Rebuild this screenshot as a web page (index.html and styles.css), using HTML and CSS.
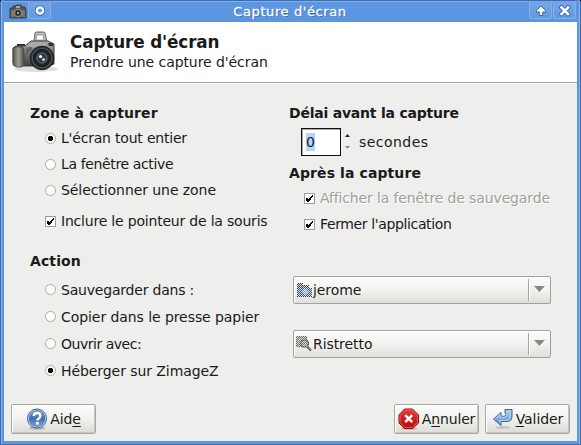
FILE: index.html
```html
<!DOCTYPE html>
<html lang="fr">
<head>
<meta charset="utf-8">
<title>Capture d'écran</title>
<link rel="stylesheet" href="styles.css">
</head>
<body>
<svg width="0" height="0" class="defs">
  <defs>
    <linearGradient id="body" x1="0" y1="0" x2="0" y2="1"><stop offset="0" stop-color="#aaa9a2"/><stop offset=".5" stop-color="#74736d"/><stop offset="1" stop-color="#3d3d3a"/></linearGradient>
    <linearGradient id="grip" x1="0" y1="0" x2="1" y2="0"><stop offset="0" stop-color="#55544d"/><stop offset=".5" stop-color="#a09f94"/><stop offset="1" stop-color="#4b4a45"/></linearGradient>
    <radialGradient id="lens"><stop offset="0" stop-color="#8a9095"/><stop offset=".45" stop-color="#333b42"/><stop offset="1" stop-color="#14191d"/></radialGradient>
    <linearGradient id="blue" x1="0" y1="0" x2="0" y2="1"><stop offset="0" stop-color="#7fa3d1"/><stop offset=".5" stop-color="#3f6dad"/><stop offset="1" stop-color="#7da7da"/></linearGradient>
    <linearGradient id="red" x1="0" y1="0" x2="0" y2="1"><stop offset="0" stop-color="#e33b3b"/><stop offset="1" stop-color="#b80808"/></linearGradient>
    <linearGradient id="arrow" x1="0" y1="0" x2="0" y2="1"><stop offset="0" stop-color="#a9c8eb"/><stop offset="1" stop-color="#6492c9"/></linearGradient>
    <pattern id="dots" width="2" height="2" patternUnits="userSpaceOnUse"><path d="M0 0h1v1H0zM1 1h1v1H1z" fill="#dcdedf"/></pattern>
    <symbol id="tick" viewBox="0 0 11 11"><path d="M2 5h2v1h1V5h1V4h1V3h1V2h1v2H8v1H7v2H6v1H5v1H3V8H2z" fill="#000"/></symbol>
    <symbol id="drop" viewBox="0 0 12 7"><path d="M2 1h10L7 7z" fill="#fff"/><path d="M0 0h11L5.5 6z" fill="#888883"/></symbol>
  </defs>
</svg>
<div class="window">
  <header class="titlebar">
    <svg class="mini-camera" width="18" height="16" viewBox="0 0 18 16"><path d="M1 4h3V2h2v1l1-2h5l1 2h3v2h1v9H1z" fill="#555650" stroke="#3c403f"/><path d="M2 6h3v7H2zm11 0h3v7h-3z" fill="#77776f"/><path d="M7 2h4v2H7z" fill="#a6a69f"/><circle cx="9" cy="9" r="4" fill="#55564f" stroke="#a09f94" stroke-width=".8"/><circle cx="9" cy="9" r="2.4" fill="#24282b"/><path d="M8 8h2v2H8z" fill="#a3a7a8"/></svg>
    <span class="tool menu"><svg width="14" height="14" viewBox="0 0 14 14"><circle cx="7" cy="6.500" r="3.2" fill="#5c93dc" stroke="#3a68a8" stroke-width="4"/><circle cx="7" cy="6.500" r="3.2" fill="#5c93dc" stroke="#fff" stroke-width="2.3"/></svg></span>
    <h1 class="caption">Capture d'écran</h1>
    <span class="tool"><svg width="14" height="14" viewBox="0 0 14 14"><path d="M7 2L11.5 6.6V8H8.7v3.5H5.3V8H2.5V6.6z" fill="#fff" stroke="#3b69a9" stroke-width="1"/></svg></span>
    <span class="tool close"><svg width="14" height="14" viewBox="0 0 14 14"><path d="M3.500 3.500l6.500 6.500m0-6.500L3.500 10" stroke="#3b69a9" stroke-width="4.400" stroke-linecap="square"/><path d="M3.500 3.500l6.500 6.500m0-6.500L3.500 10" stroke="#fff" stroke-width="2.500" stroke-linecap="square"/></svg></span>
  </header>
  <div class="client">
    <section class="banner">
      <svg class="camera" width="48" height="46" viewBox="0 0 48 46">
        <ellipse cx="24" cy="39" rx="22" ry="3" fill="#dededc"/>
        <path d="M22 11l1-8q0-1 2-1h6q2 0 2 1l2 9" fill="#bbb" stroke="#666"/><path d="M25 5h6l1 5h-8z" fill="#fff" stroke="#888" stroke-width=".7"/>
        <path d="M1 18l3-2h9l6-5h17l6 3v20l-5 2H4l-3-3z" fill="url(#body)" stroke="#3d3c38"/>
        <path d="M1 19q0-2 3-2h5q3 0 3 3v15l-2 2H4l-3-2z" fill="url(#grip)" stroke="#45443e" stroke-width=".7"/>
        <path d="M14 16l6-4h13l2 4-10 2z" fill="#aaa9a5"/><path d="M5 14h8v2H5zM36 13h5v3h-4z" fill="#34342f"/>
        <path d="M15 18v6m2-7v5m2-5v4" stroke="#4a4946"/>
        <circle cx="30" cy="28" r="11.800" fill="#30383c" stroke="#171b1d"/><circle cx="30" cy="28" r="10" fill="#59636a"/><circle cx="30" cy="28" r="8.700" fill="url(#lens)" stroke="#14191b"/><circle cx="30" cy="28" r="5" fill="#303940" stroke="#7f878b" stroke-width=".7"/><circle cx="28.500" cy="26.500" r="1.600" fill="#fff"/><circle cx="31.500" cy="29.500" r="1.600" fill="#c2ccd1"/>
      </svg>
      <div><h2 class="title">Capture d'écran</h2><p class="subtitle">Prendre une capture d'écran</p></div>
    </section>
    <main class="options">
      <section class="zone">
        <h3 class="heading">Zone à capturer</h3>
        <label class="choice snug"><i class="radio on"></i><span>L'écran tout entier</span></label>
        <label class="choice tight"><i class="radio"></i><span>La fenêtre active</span></label>
        <label class="choice"><i class="radio"></i><span>Sélectionner une zone</span></label>
        <label class="choice pointer snug"><i class="check"><svg width="11" height="11"><use href="#tick"/></svg></i><span>Inclure le pointeur de la souris</span></label>
      </section>
      <section class="timing">
        <h3 class="heading narrow">Délai avant la capture</h3>
        <div class="delay"><span class="entry"><span class="selected">0</span></span><svg class="spin" width="6" height="16" viewBox="0 0 6 16"><path d="M0 3h5L2.5 0z" fill="#222"/><path d="M1 14h5l-2.500 3z" fill="#fff"/><path d="M0 12h5l-2.500 3z" fill="#888"/></svg><span class="unit">secondes</span></div>
        <h3 class="heading after">Après la capture</h3>
        <label class="choice disabled"><i class="check"><svg width="11" height="11"><use href="#tick"/></svg></i><span>Afficher la fenêtre de sauvegarde</span></label>
        <label class="choice tight"><i class="check"><svg width="11" height="11"><use href="#tick"/></svg></i><span>Fermer l'application</span></label>
      </section>
    </main>
    <section class="action">
      <h3 class="heading">Action</h3>
      <div class="line"><label class="choice snug"><i class="radio"></i><span>Sauvegarder dans :</span></label>
        <div class="combo"><svg width="17" height="16" viewBox="0 0 17 16"><path d="M1 1h6v2h6v3h3v9H1z" fill="#3b4045"/><path d="M2 6h14v8H1z" fill="#2f5080"/><path d="M6 10l3-4 4 4-4 3z" fill="#91abc9"/><path d="M1 1h6v2h6v3h3v9H1z" fill="url(#dots)"/></svg><span>jerome</span><b class="divider"></b><svg class="drop" width="12" height="7"><use href="#drop"/></svg></div></div>
      <div class="line"><label class="choice"><i class="radio"></i><span>Copier dans le presse papier</span></label></div>
      <div class="line"><label class="choice tighter"><i class="radio"></i><span>Ouvrir avec:</span></label>
        <div class="combo"><svg width="17" height="16" viewBox="0 0 17 16"><path d="M0 0h11v11H0z" fill="#62664f"/><path d="M2 2h7v6H2z" fill="#7e8355"/><circle cx="8.500" cy="7.500" r="4" fill="#70777b" stroke="#393c3d"/><path d="M0 0h12v12H0z" fill="url(#dots)"/><circle cx="8.500" cy="7.500" r="3.800" fill="none" stroke="#666b6d" stroke-width=".7"/><path d="M11.500 11l3.500 3.500" stroke="#594933" stroke-width="2.200"/><path d="M12 11.500l2.500 2.500" stroke="#c69a55"/></svg><span class="app">Ristretto</span><b class="divider"></b><svg class="drop" width="12" height="7"><use href="#drop"/></svg></div></div>
      <div class="line"><label class="choice"><i class="radio on"></i><span>Héberger sur ZimageZ</span></label></div>
    </section>
    <footer class="buttons">
      <button class="help"><svg width="22" height="22" viewBox="0 0 22 22"><ellipse cx="11" cy="20" rx="8" ry="1.700" fill="#b5b5b2"/><circle cx="11" cy="10.500" r="9.500" fill="#dce8f5" stroke="#2f599a"/><circle cx="11" cy="10.500" r="8" fill="url(#blue)" stroke="#3969a8" stroke-width=".6"/><path d="M7.800 8q0-3 3.300-3t3.300 2.800q0 1.700-1.700 2.700-1.400.8-1.400 2" fill="none" stroke="#fff" stroke-width="2.400"/><path d="M10 14h2.700v2.500H10z" fill="#fff"/></svg><span>Aid<u>e</u></span></button>
      <button class="cancel"><svg width="22" height="22" viewBox="0 0 22 22"><ellipse cx="11" cy="20.500" rx="8" ry="1.300" fill="#b5b5b2"/><path d="M6.500 1h8L20.500 7v8l-6 5.500h-8L1 15V7z" fill="url(#red)" stroke="#a40000"/><path d="M7 2h7.200l5.300 5.300v7.200l-5.300 5H7l-5-5V7.300z" fill="none" stroke="#f08080" stroke-width=".7"/><path d="M7.200 7.200l7 7m0-7l-7 7" stroke="#fff" stroke-width="2.400"/></svg><span>A<u>n</u>nuler</span></button>
      <button class="ok"><svg width="22" height="22" viewBox="0 0 22 22"><ellipse cx="11" cy="19.500" rx="8" ry="1.500" fill="#c5c5c2"/><path d="M1.500 11L9 4.500v3.800h3q2 0 2-2V5h-1V1.500h7V8q0 5.500-5 5.500H9v4z" fill="url(#arrow)" stroke="#3566a5" stroke-linejoin="round"/><path d="M3 11l5-4.200v2.500h4.500Q15 9 15 6V3M16.500 3h1.800v5q0 4.500-4 4.500H8v2.700" fill="none" stroke="#d3e3f6" stroke-width=".8"/></svg><span><u>V</u>alider</span></button>
    </footer>
  </div>
</div>
</body>
</html>
```
FILE: styles.css
```css
* { box-sizing: border-box; }
body { margin: 0; width: 581px; height: 445px; overflow: hidden; background: #111; font: 14px/18px "DejaVu Sans", sans-serif; color: #1a1a1a; letter-spacing: -.07px; }
h1, h2, h3, p { margin: 0; }
svg { display: block; flex: none; }
.defs { position: absolute; }
.window { width: 581px; height: 445px; padding: 0 3px 3px; border: 1px solid #3d6cb1; border-top: 0; border-radius: 3px 3px 0 0; background: #5c96e1; box-shadow: inset 1px 0 #88b4ef, inset -1px 0 #88b4ef; }
.titlebar { height: 22px; display: flex; align-items: flex-start; border-top: 1px solid #3d6cb1; box-shadow: inset 0 1px #83b0ed; padding: 0 1px 0 5px; }
.mini-camera { margin: 3px 1px 0 0; }
.tool { width: 23px; height: 18px; display: flex; justify-content: center; padding-top: 2px; border: 1px solid #85afe9; border-top-color: #76a5e7; border-radius: 0 0 3px 3px; background: linear-gradient(#76a5e6, #629ae2); }
.close { margin-left: 1px; }
.caption { flex: 1; text-align: center; font-size: 13px; line-height: 22px; color: #fff; font-weight: 400; letter-spacing: .6px; text-shadow: 1px 1px #3b69aa; -webkit-text-stroke: .3px #fff; }
.client { height: 419px; background: #eeeeec; display: flex; flex-direction: column; }
.banner { height: 61px; background: #fff; border-bottom: 1px solid #a3a39b; padding: 8px 0 0 8px; display: flex; gap: 10px; flex: none; box-shadow: 0 1px #fff; }
.title { font-size: 16.8px; line-height: 22px; letter-spacing: -.12px; margin-top: 1px; }
.subtitle { line-height: 18px; }
.options { display: grid; grid-template-columns: 259px 1fr; padding: 21px 0 0 26px; height: 167px; }
.heading { font-size: 14px; line-height: 18px; letter-spacing: .1px; }
.narrow { letter-spacing: -.22px; }
.choice { display: flex; align-items: center; gap: 5px; height: 26px; padding-left: 15px; white-space: nowrap; }
.snug { letter-spacing: -.2px; }
.tight { letter-spacing: -.37px; }
.tighter { letter-spacing: -.48px; }
.zone .heading { margin-bottom: 3px; }
.pointer { margin-top: 5px; }
.radio { width: 11px; height: 11px; border: 1px solid #aaa9a1; border-radius: 50%; background: #fff; flex: none; }
.radio.on { background: radial-gradient(circle, #000 0 2.300px, #fff 3px); }
.check { width: 11px; height: 11px; border: 1px solid #9e9e96; background: #fff; flex: none; }
.check svg { margin: -1px; }
.delay { display: flex; align-items: center; height: 28px; margin: 6px 0 8px 12px; }
.entry { width: 40px; height: 28px; border: 1px solid #111; padding: 4px; background: #fff; box-shadow: inset 1px 1px #aaa9a1; }
.selected { display: block; width: 9px; height: 18px; line-height: 19px; background: #b3d5ff; }
.spin { margin: 0 8px 0 4px; }
.unit { letter-spacing: .45px; }
.after { margin-bottom: 3px; }
.disabled { color: #a0a09a; letter-spacing: -.13px; text-shadow: 1px 1px #fff; }
.action { padding: 2px 26px 0; height: 136px; }
.action .heading { margin-bottom: 6px; }
.line { display: flex; justify-content: space-between; height: 27px; align-items: center; }
.combo { width: 258px; height: 28px; display: flex; align-items: center; padding: 0 4px 0 2px; border: 1px solid #a2a299; border-radius: 2px; background: linear-gradient(#fbfbfa, #f2f2ef 50%, #dfdfdb); box-shadow: inset 1px 1px #fff; flex: none; }
.divider { margin-left: auto; width: 2px; height: 22px; background: #a4a49b; border-right: 1px solid #fff; }
.drop { margin-left: 4px; }
.buttons { display: flex; gap: 6px; padding: 0 7px; margin-top: 18px; }
button { height: 30px; width: 85px; display: flex; align-items: center; justify-content: center; gap: 2px; padding: 0; font: inherit; letter-spacing: inherit; color: inherit; border: 1px solid #a9a9a0; border-radius: 2px; background: linear-gradient(#fbfbfa, #f1f1ee 50%, #dcdcd7); box-shadow: inset 1px 1px #fff, inset -1px -1px #c5c5bf; }
.help { margin-right: auto; }
.cancel { letter-spacing: -.15px; }
u { text-underline-offset: 2px; text-decoration-thickness: 1px; }
```
